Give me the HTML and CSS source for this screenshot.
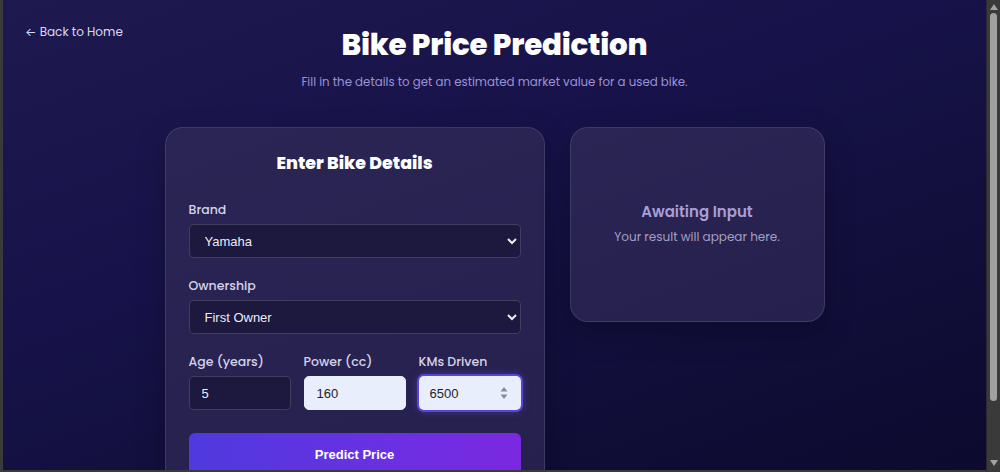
FILE: index.html
```html
<!DOCTYPE html>
<html lang="en">

<head>
    <meta charset="UTF-8">
    <meta name="viewport" content="width=device-width, initial-scale=1.0">
    <title>Bike Price Prediction</title>
    <link rel="stylesheet" href="styles.css">
</head>

<body>
    <div class="viewport">
        <div class="page">
            <header class="top">
                <a class="back" href="#">&larr; Back to Home</a>
                <h1>Bike Price Prediction</h1>
                <span></span>
            </header>
            <p class="lead">Fill in the details to get an estimated market value for a used bike.</p>

            <main class="panels">
                <form class="card form-card">
                    <h2>Enter Bike Details</h2>

                    <div class="field">
                        <label for="brand">Brand</label>
                        <select id="brand">
                            <option>Yamaha</option>
                            <option>Honda</option>
                            <option>Bajaj</option>
                            <option>Royal Enfield</option>
                        </select>
                    </div>

                    <div class="field">
                        <label for="owner">Ownership</label>
                        <select id="owner">
                            <option>First Owner</option>
                            <option>Second Owner</option>
                            <option>Third Owner</option>
                        </select>
                    </div>

                    <div class="row">
                        <div class="field">
                            <label for="age">Age (years)</label>
                            <input id="age" type="text" value="5">
                        </div>
                        <div class="field">
                            <label for="power">Power (cc)</label>
                            <input id="power" class="filled" type="text" value="160">
                        </div>
                        <div class="field">
                            <label for="kms">KMs Driven</label>
                            <div class="num filled active">
                                <input id="kms" type="text" value="6500">
                                <span class="spin">
                                    <svg width="8" height="14" viewBox="0 0 8 14">
                                        <path d="M4 1L7.5 5.5H0.5Z" fill="#8a8a96" />
                                        <path d="M4 13L7.5 8.5H0.5Z" fill="#8a8a96" />
                                    </svg>
                                </span>
                            </div>
                        </div>
                    </div>

                    <button type="button" class="predict">Predict Price</button>
                </form>

                <section class="card result-card">
                    <h3>Awaiting Input</h3>
                    <p>Your result will appear here.</p>
                </section>
            </main>
        </div>
    </div>

    <!-- window scrollbar -->
    <div class="scrollbar">
        <svg class="arrow" width="8" height="6" viewBox="0 0 8 6"><path d="M4 0L8 6H0Z" fill="#a3a3a3" /></svg>
        <div class="track"><div class="thumb"></div></div>
        <svg class="arrow" width="8" height="6" viewBox="0 0 8 6"><path d="M4 6L8 0H0Z" fill="#a3a3a3" /></svg>
    </div>
</body>

</html>
```

FILE: styles.css
```css
* {
    box-sizing: border-box;
}

html,
body {
    height: 100%;
}

body {
    margin: 0;
    display: flex;
    background-color: #3a3a3c;
    font-family: "Poppins", "Inter", sans-serif;
    color: #fff;
    overflow: hidden;
}

.viewport {
    flex: 1;
    height: 470px;
    margin-left: 3px;
    overflow: hidden;
    background: linear-gradient(160deg, #1e1a4f 0%, #17134a 40%, #0c0a2d 100%);
}

.scrollbar {
    width: 14px;
    display: flex;
    flex-direction: column;
    align-items: center;
    padding: 4px 0 6px;
    background-color: #3a3a3a;
    border-left: 1px solid #2a2a2c;
}

.arrow {
    flex: none;
}

.track {
    flex: 1;
    width: 100%;
    padding: 3px 3px 0;
}

.thumb {
    width: 7px;
    margin: 0 auto;
    height: 388px;
    border-radius: 4px;
    background-color: #a0a0a0;
}

.page {
    padding: 22px 0 44px;
}

/* header: back link left, title centred */
.top {
    display: grid;
    grid-template-columns: 1fr auto 1fr;
    align-items: start;
}

.back {
    justify-self: start;
    margin: 1px 0 0 22px;
    font-size: 12px;
    line-height: 18px;
    color: #dcd8f2;
    text-decoration: none;
}

h1 {
    margin: 5px 0 0;
    font-size: 29.3px;
    line-height: 36px;
    font-weight: 800;
    letter-spacing: -0.2px;
}

.lead {
    margin: 9px 0 0;
    text-align: center;
    font-size: 11.8px;
    line-height: 20px;
    color: #9c92d6;
}

.panels {
    display: flex;
    justify-content: center;
    align-items: flex-start;
    gap: 25px;
    margin-top: 35px;
}

.card {
    border: 1px solid rgba(255, 255, 255, 0.11);
    border-radius: 18px;
    background: linear-gradient(160deg, #2b2555 0%, #25204d 100%);
    box-shadow: 0 10px 30px rgba(0, 0, 0, 0.25);
}

.form-card {
    width: 380px;
    padding: 23px 23px 24px;
}

h2 {
    margin: 0 0 25px;
    text-align: center;
    font-size: 17.4px;
    line-height: 24px;
    font-weight: 800;
}

.field {
    display: flex;
    flex-direction: column;
    margin-bottom: 18px;
}

label {
    font-size: 12.5px;
    line-height: 20px;
    font-weight: 500;
    color: #d6d2ea;
    margin-bottom: 4px;
}

select,
input {
    height: 34px;
    width: 100%;
    padding: 0 14px;
    border: 1px solid rgba(255, 255, 255, 0.16);
    border-radius: 5px;
    background-color: #1c183e;
    color: #ecebf4;
    font-family: "Liberation Sans", Arial, sans-serif;
    font-size: 13px;
    outline: none;
}

select {
    padding-left: 11px;
}

.row {
    display: grid;
    grid-template-columns: repeat(3, 1fr);
    gap: 13px;
    margin-bottom: 6px;
}

.row .field {
    margin-bottom: 0;
}

.row input {
    padding-left: 12px;
}

.filled,
.filled input {
    background-color: #e9eefc;
    color: #1d1d2a;
    border-color: #e9eefc;
}

.num {
    display: flex;
    align-items: center;
    height: 34px;
    border-radius: 5px;
    padding-right: 13px;
}

.num input {
    border: none;
    background: transparent;
    padding-left: 11px;
}

.active {
    box-shadow: 0 0 0 2px #5b45d6, 0 0 10px rgba(120, 90, 255, 0.55);
}

.spin {
    display: flex;
}

.predict {
    display: block;
    width: 100%;
    height: 42px;
    margin-top: 23px;
    border: none;
    border-radius: 6px;
    background: linear-gradient(90deg, #4f3ade 0%, #6a30e2 60%, #7b29e0 100%);
    color: #fff;
    font-family: "Liberation Sans", Arial, sans-serif;
    font-size: 13px;
    font-weight: bold;
}

.result-card {
    width: 255px;
    height: 195px;
    display: flex;
    flex-direction: column;
    justify-content: center;
    align-items: center;
    text-align: center;
}

h3 {
    margin: 0;
    font-size: 15px;
    line-height: 20px;
    font-weight: 600;
    color: #a79fd8;
}

.result-card p {
    margin: 6px 0 2px;
    font-size: 12px;
    line-height: 18px;
    color: #a49fc4;
}
```
